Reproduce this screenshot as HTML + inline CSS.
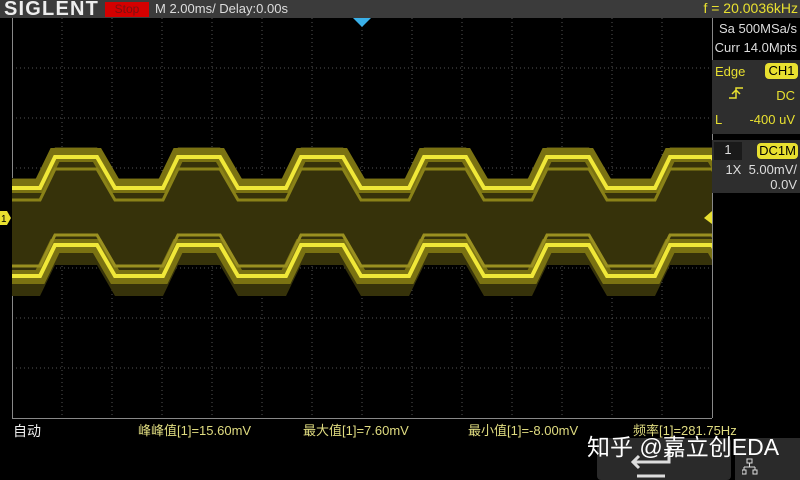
<!DOCTYPE html>
<html><head><meta charset="utf-8"><style>
body{margin:0;width:800px;height:480px;background:#000;overflow:hidden;position:relative;font-family:"Liberation Sans","Noto Sans CJK SC",sans-serif}
.a{position:absolute;white-space:nowrap}
</style></head><body>
<div class="a" style="left:0;top:0;width:800px;height:18px;background:#3b3b3b"></div>
<div class="a" style="left:4px;top:-2px;font:bold 20px 'Liberation Sans',sans-serif;color:#eee;letter-spacing:1.2px">SIGLENT</div>
<div class="a" style="left:105px;top:2px;width:44px;height:15px;background:#d40000;color:#7a1010;font-size:12px;text-align:center;line-height:15px">Stop</div>
<div class="a" style="left:155px;top:1px;color:#ddd;font-size:13px">M 2.00ms/ Delay:0.00s</div>
<div class="a" style="right:2px;top:0px;color:#e8e030;font-size:14px">f = 20.0036kHz</div>
<svg class="a" style="left:0;top:0" width="800" height="480">
<defs>
<path id="w" d="M-5,0 l45,0 l15,-31 l42,0 l18,31 l48,0 l15,-31 l42,0 l18,31 l48,0 l15,-31 l42,0 l18,31 l48,0 l15,-31 l42,0 l18,31 l48,0 l15,-31 l42,0 l18,31 l48,0 l15,-31 l42,0 l18,31 l48,0 l15,-31 l42,0 l18,31 l48,0" fill="none"/>
<clipPath id="c"><rect x="12" y="18" width="700" height="400"/></clipPath>
</defs>
<g stroke="#555" stroke-width="1" stroke-dasharray="1,3">
<line x1="62" y1="18" x2="62" y2="418"/><line x1="112" y1="18" x2="112" y2="418"/><line x1="162" y1="18" x2="162" y2="418"/><line x1="212" y1="18" x2="212" y2="418"/><line x1="262" y1="18" x2="262" y2="418"/><line x1="312" y1="18" x2="312" y2="418"/><line x1="362" y1="18" x2="362" y2="418"/><line x1="412" y1="18" x2="412" y2="418"/><line x1="462" y1="18" x2="462" y2="418"/><line x1="512" y1="18" x2="512" y2="418"/><line x1="562" y1="18" x2="562" y2="418"/><line x1="612" y1="18" x2="612" y2="418"/><line x1="662" y1="18" x2="662" y2="418"/>
<line x1="12" y1="68" x2="712" y2="68"/><line x1="12" y1="118" x2="712" y2="118"/><line x1="12" y1="168" x2="712" y2="168"/><line x1="12" y1="218" x2="712" y2="218"/><line x1="12" y1="268" x2="712" y2="268"/><line x1="12" y1="318" x2="712" y2="318"/><line x1="12" y1="368" x2="712" y2="368"/>
</g>
<line x1="12.5" y1="18" x2="12.5" y2="418" stroke="#888"/>
<line x1="12" y1="418.5" x2="712" y2="418.5" stroke="#888"/>
<line x1="712.5" y1="18" x2="712.5" y2="418" stroke="#888"/>
<g clip-path="url(#c)">
<path fill="#36320a" d="M-5,178 L40,178 L55,147 L97,147 L115,178 L163,178 L178,147 L220,147 L238,178 L286,178 L301,147 L343,147 L361,178 L409,178 L424,147 L466,147 L484,178 L532,178 L547,147 L589,147 L607,178 L655,178 L670,147 L712,147 L730,178 L730,296 L712,265 L670,265 L655,296 L607,296 L589,265 L547,265 L532,296 L484,296 L466,265 L424,265 L409,296 L361,296 L343,265 L301,265 L286,296 L238,296 L220,265 L178,265 L163,296 L115,296 L97,265 L55,265 L40,296 L-5,296 Z"/>
<use href="#w" transform="translate(0,186)" stroke="#7a7212" stroke-width="14"/>
<use href="#w" transform="translate(0,188)" stroke="#f0e838" stroke-width="4"/>
<use href="#w" transform="translate(0,200)" stroke="#8a8218" stroke-width="3"/>
<use href="#w" transform="translate(0,277)" stroke="#7a7212" stroke-width="14"/>
<use href="#w" transform="translate(0,276)" stroke="#f0e838" stroke-width="4"/>
<use href="#w" transform="translate(0,266)" stroke="#9a9020" stroke-width="3"/>
</g>
<polygon points="353,18 371,18 362,27" fill="#3ab0e8"/>
<polygon points="0,211 7,211 11,218 7,225 0,225" fill="#e8e030"/>
<text x="1" y="222" font-size="10" fill="#000" font-family="Liberation Sans">1</text>
<polygon points="712,211 704,218 712,224" fill="#e8e030"/>
</svg>
<div class="a" style="right:3px;top:21px;color:#ddd;font-size:13px">Sa 500MSa/s</div>
<div class="a" style="right:3px;top:40px;color:#ddd;font-size:13px">Curr 14.0Mpts</div>
<div class="a" style="left:712px;top:60px;width:88px;height:74px;background:#2e2e2e"></div>
<div class="a" style="left:715px;top:64px;color:#e8e030;font-size:13px">Edge</div>
<div class="a" style="left:765px;top:63px;width:33px;height:16px;background:#e8e030;border-radius:4px;color:#000;font-size:13px;text-align:center;line-height:16px">CH1</div>
<svg class="a" style="left:728px;top:86px" width="16" height="14"><path d="M1,12 H8 V2 H15 M4,8 L8,4 L12,8" stroke="#e8e030" stroke-width="1.5" fill="none"/></svg>
<div class="a" style="right:5px;top:88px;color:#e8e030;font-size:13px">DC</div>
<div class="a" style="left:715px;top:112px;color:#e8e030;font-size:13px">L</div>
<div class="a" style="right:5px;top:112px;color:#e8e030;font-size:13px">-400 uV</div>
<div class="a" style="left:712px;top:140px;width:88px;height:53px;background:#2e2e2e"></div>
<div class="a" style="left:714px;top:142px;width:28px;height:18px;background:#1a1a1a;color:#ddd;font-size:13px;text-align:center">1</div>
<div class="a" style="left:757px;top:143px;width:41px;height:16px;background:#e8e030;border-radius:4px;color:#000;font-size:13px;text-align:center;line-height:16px">DC1M</div>
<div class="a" style="right:3px;top:162px;color:#ddd;font-size:13px">1X&nbsp; 5.00mV/</div>
<div class="a" style="right:3px;top:177px;color:#ddd;font-size:13px">0.0V</div>
<div class="a" style="left:13px;top:421px;color:#eee;font-size:14px">自动</div>
<div class="a" style="left:138px;top:420px;color:#e0dc80;font-size:13px">峰峰值[1]=15.60mV</div>
<div class="a" style="left:303px;top:420px;color:#e0dc80;font-size:13px">最大值[1]=7.60mV</div>
<div class="a" style="left:468px;top:420px;color:#e0dc80;font-size:13px">最小值[1]=-8.00mV</div>
<div class="a" style="left:633px;top:420px;color:#e0dc80;font-size:13px">频率[1]=281.75Hz</div>
<div class="a" style="left:597px;top:438px;width:134px;height:42px;background:#2a2a2a;border-radius:4px"></div>
<div class="a" style="left:735px;top:438px;width:65px;height:42px;background:#2a2a2a"></div>
<svg class="a" style="left:625px;top:440px" width="60" height="40"><path d="M44,6 V22 H8 M14,16 L8,22 L14,28 M12,36 H40" stroke="#ddd" stroke-width="3" fill="none"/></svg>
<svg class="a" style="left:742px;top:458px" width="16" height="18"><path d="M5,1 h5 v4 h-5z M7.5,5 v4 M2,9 h11 M2,9 v3 M13,9 v3 M0,12 h4 v4 h-4z M11,12 h4 v4 h-4z" stroke="#ddd" fill="none"/></svg>
<div class="a" style="left:587px;top:428px;color:#fff;font-size:23px">知乎 @嘉立创EDA</div>
</body></html>
